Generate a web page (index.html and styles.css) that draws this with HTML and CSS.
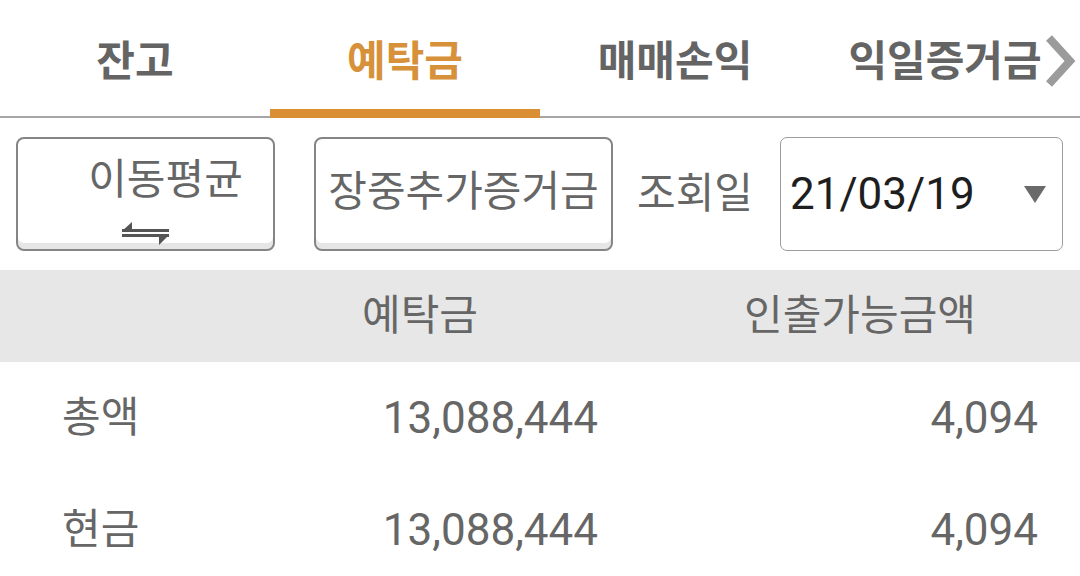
FILE: index.html
```html
<!DOCTYPE html>
<html lang="ko">

<head>
  <meta charset="UTF-8">
  <title>예탁금</title>
  <link rel="stylesheet" href="styles.css">
</head>

<body>
  <!--탭-->
  <div class="tabs">
    <div class="tab">잔고</div>
    <div class="tab active">예탁금</div>
    <div class="tab">매매손익</div>
    <div class="tab">익일증거금</div>
    <svg class="tab-more" width="32" height="54" viewBox="0 0 32 54">
      <polyline points="5,4 26,27 5,50" fill="none" stroke="#9b9b9b" stroke-width="8" />
    </svg>
  </div>

  <!--조회 조건-->
  <div class="toolbar">
    <div class="btn btn-avg">
      <span>이동평균</span>
      <svg class="swap" width="47" height="23" viewBox="0 0 47 23">
        <polygon points="0,9 10,0 10,9" fill="#555" />
        <rect x="0" y="7" width="47" height="3" fill="#555" />
        <rect x="0" y="12" width="47" height="3" fill="#555" />
        <polygon points="37,13 47,13 37,23" fill="#555" />
      </svg>
    </div>
    <div class="btn btn-margin">장중추가증거금</div>
    <div class="label">조회일</div>
    <div class="select">
      <span class="date">21/03/19</span>
      <span class="caret"></span>
    </div>
  </div>

  <!--표-->
  <div class="table">
    <div class="row head">
      <div class="cell name"></div>
      <div class="cell c1">예탁금</div>
      <div class="cell c2">인출가능금액</div>
    </div>
    <div class="row">
      <div class="cell name">총액</div>
      <div class="cell c1">13,088,444</div>
      <div class="cell c2">4,094</div>
    </div>
    <div class="row">
      <div class="cell name">현금</div>
      <div class="cell c1">13,088,444</div>
      <div class="cell c2">4,094</div>
    </div>
  </div>
</body>

</html>
```

FILE: styles.css
```css
* {
  margin: 0;
  padding: 0;
  box-sizing: border-box;
}

body {
  width: 1080px;
  background-color: #fff;
  font-family: Roboto, "Noto Sans CJK KR", sans-serif;
  color: #666;
}

/* 탭 */
.tabs {
  position: relative;
  display: flex;
  border-bottom: 2px solid #a6a6a6;
}

.tab {
  flex: 0 0 270px;
  height: 116px;
  padding-top: 8px;
  display: flex;
  align-items: center;
  justify-content: center;
  font-size: 42px;
  font-weight: bold;
  line-height: 46px;
  color: #646464;
}

.tab.active {
  color: #d7913a;
  box-shadow: inset 0 -7px 0 #db8f34, 0 2px 0 #db8f34;
}

.tab-more {
  position: absolute;
  right: 4px;
  top: 34px;
}

/* 조회 조건 */
.toolbar {
  display: flex;
  align-items: center;
  padding: 19px 17px 19px 16px;
}

.btn {
  flex-shrink: 0;
  height: 114px;
  border: 2px solid #858585;
  border-radius: 8px;
  background-color: #fff;
  box-shadow: inset 0 -6px 0 #e6e6e6;
  font-size: 42px;
  line-height: 46px;
  color: #666;
}

.btn-avg {
  width: 259px;
  display: flex;
  flex-direction: column;
  align-items: center;
  padding-top: 18px;
}

.btn-avg span {
  padding-left: 40px;
}

.btn-avg .swap {
  margin-top: 19px;
}

.btn-margin {
  width: 299px;
  margin-left: 39px;
  display: flex;
  align-items: center;
  justify-content: center;
  padding-bottom: 4px;
}

.label {
  flex-shrink: 0;
  margin-left: 24px;
  font-size: 42px;
  line-height: 46px;
  color: #666;
}

.select {
  flex-shrink: 0;
  width: 283px;
  height: 114px;
  margin-left: auto;
  border: 1px solid #9c9c9c;
  border-radius: 7px;
  display: flex;
  align-items: center;
  justify-content: space-between;
  padding: 0 16px 0 9px;
}

.date {
  font-size: 44px;
  color: #1e1e1e;
}

.caret {
  width: 0;
  height: 0;
  border-left: 11px solid transparent;
  border-right: 11px solid transparent;
  border-top: 17px solid #6a6a6a;
}

/* 표 */
.row {
  display: flex;
  align-items: center;
  height: 112px;
  font-size: 44px;
  line-height: 48px;
}

.row.head {
  height: 92px;
  background-color: #e7e7e7;
  font-size: 42px;
}

.cell.name {
  width: 240px;
  padding-left: 62px;
  font-size: 42px;
}

.cell.c1 {
  width: 360px;
  text-align: right;
  padding-right: 2px;
}

.cell.c2 {
  width: 480px;
  text-align: right;
  padding-right: 42px;
}

.head .cell.c1,
.head .cell.c2 {
  text-align: center;
}

.head .cell.c1 {
  padding-right: 0;
}

.head .cell.c2 {
  padding-left: 40px;
  padding-right: 0;
}
```
